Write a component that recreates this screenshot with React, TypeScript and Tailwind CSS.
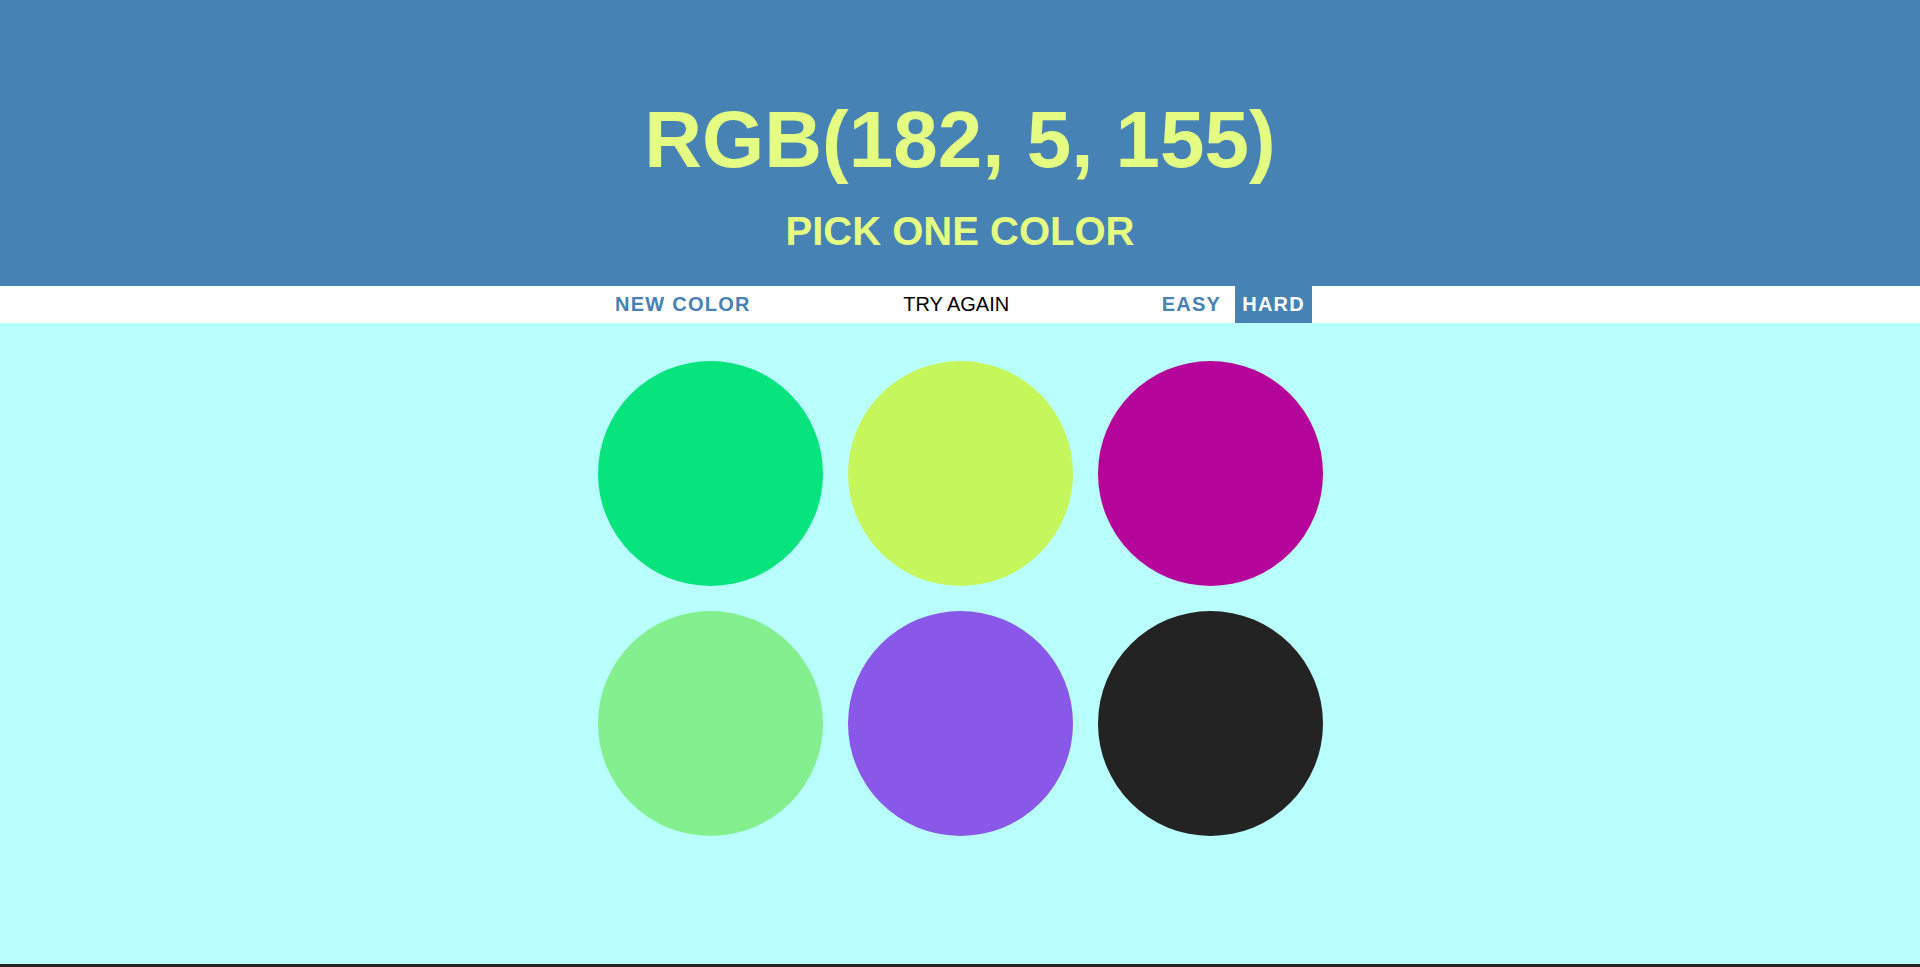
const circles = ["#07e47e", "#c5f65c", "#b6059b", "#84ef8f", "#8a58e8", "#232323"];

function ModeButton({ label, selected }: { label: string; selected?: boolean }) {
  return (
    <button
      className={
        selected
          ? "h-full px-[7.5px] bg-[#4682b4] text-white font-bold uppercase tracking-[1.25px]"
          : "h-full px-[7.5px] bg-white text-[#4682b4] font-bold uppercase tracking-[1.25px]"
      }
    >
      {label}
    </button>
  );
}

export default function App() {
  return (
    <div
      className="h-[967px] w-full bg-[#232323] overflow-hidden"
      style={{ fontFamily: '"Liberation Sans", Arial, sans-serif' }}
    >
      <div className="h-[964px] flex flex-col bg-[#b8fffd]">
        <header className="h-[286px] shrink-0 bg-[#4682b4] text-[#e3fc81] font-bold text-center pt-[100px]">
          <h1 className="text-[80px] leading-none">RGB(182, 5, 155)</h1>
          <h2 className="mt-[31px] text-[40px] leading-none">PICK ONE COLOR</h2>
        </header>

        <nav className="h-[37px] shrink-0 bg-white flex justify-center items-center gap-[6px] text-[20px] leading-[37px]">
          <ModeButton label="New Color" />
          <span className="w-[384px] text-center text-black">TRY AGAIN</span>
          <ModeButton label="Easy" />
          <ModeButton label="Hard" selected />
        </nav>

        <main className="flex-1">
          <div className="w-[750px] mx-auto pt-[25px] flex flex-wrap">
            {circles.map((c) => (
              <div
                key={c}
                className="w-[225px] h-[225px] m-[12.5px] rounded-full"
                style={{ backgroundColor: c }}
              />
            ))}
          </div>
        </main>
      </div>
    </div>
  );
}
